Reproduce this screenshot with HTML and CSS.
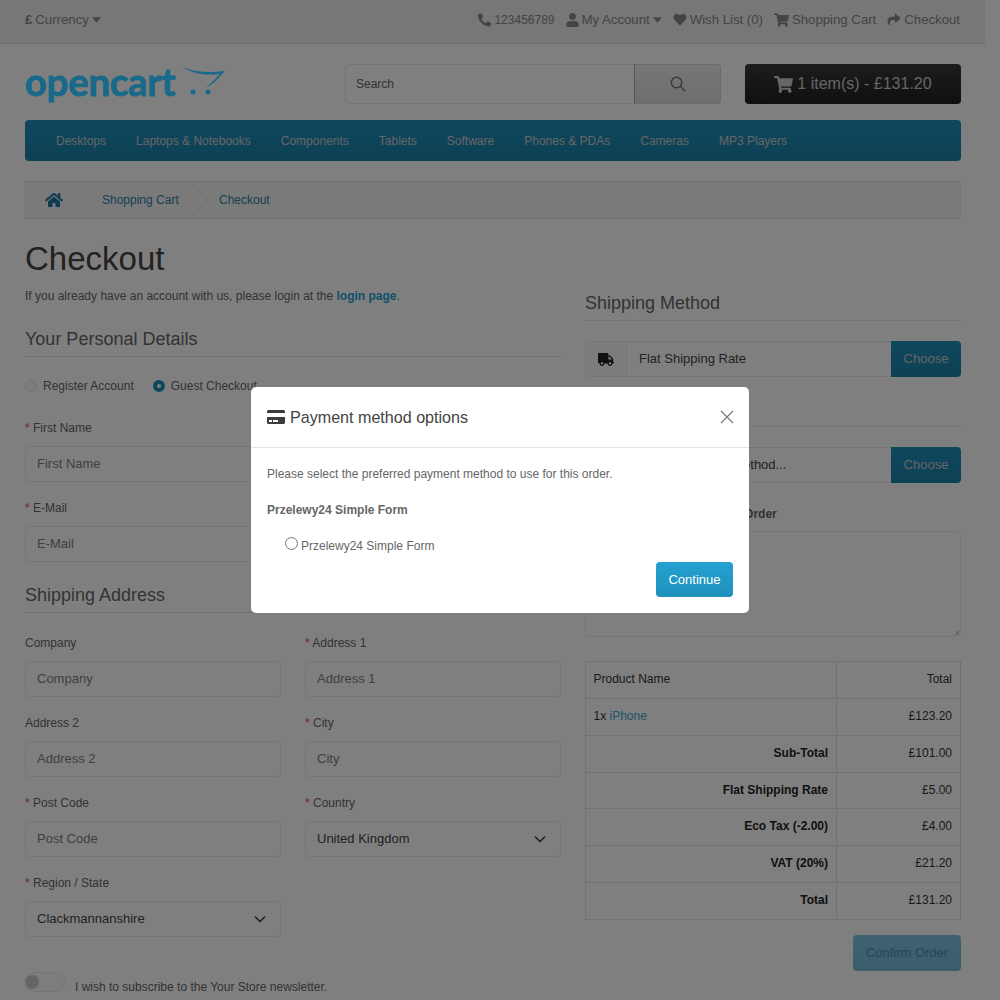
FILE: index.html
```html
<!DOCTYPE html>
<html lang="en">
<head>
<meta charset="utf-8">
<title>Checkout</title>
<link rel="stylesheet" href="styles.css">
</head>
<body>
<div class="page">
  <nav class="topbar">
    <div class="top-inner">
      <div class="top-left"><span class="pound">£</span> Currency <svg class="caret" viewBox="0 0 10 6"><path d="M0 0h10L5 6z"/></svg></div>
      <div class="top-links">
        <span class="tl phone"><svg class="ic ic-phone" viewBox="0 0 512 512"><path transform="matrix(-1 0 0 1 512 0)" d="M493.4 24.6l-104-24c-11.3-2.6-22.9 3.3-27.5 13.9l-48 112c-4.2 9.8-1.4 21.3 6.9 28l60.6 49.6c-36 76.7-98.9 140.5-177.2 177.2l-49.6-60.6c-6.8-8.3-18.2-11.1-28-6.9l-112 48C3.9 366.5-2 378.1.6 389.4l24 104C27.1 504.2 36.7 512 48 512c256.1 0 464-207.5 464-464 0-11.2-7.7-20.9-18.6-23.4z"/></svg><span class="num">123456789</span></span>
        <span class="tl"><svg class="ic ic-user" viewBox="0 0 448 512"><path d="M224 256c70.7 0 128-57.3 128-128S294.7 0 224 0 96 57.3 96 128s57.3 128 128 128zm89.6 32h-16.7c-22.2 10.2-46.9 16-72.9 16s-50.6-5.8-72.9-16h-16.7C60.2 288 0 348.2 0 422.4V464c0 26.5 21.5 48 48 48h352c26.5 0 48-21.5 48-48v-41.6c0-74.2-60.2-134.4-134.4-134.4z"/></svg>My Account <svg class="caret" viewBox="0 0 10 6"><path d="M0 0h10L5 6z"/></svg></span>
        <span class="tl"><svg class="ic ic-heart" viewBox="0 0 512 512"><path d="M462.3 62.6C407.5 15.9 326 24.3 275.7 76.2L256 96.5l-19.7-20.3C186.1 24.3 104.5 15.9 49.7 62.6c-62.8 53.6-66.1 149.8-9.9 207.9l193.5 199.8c12.5 12.9 32.8 12.9 45.3 0l193.5-199.8c56.3-58.1 53-154.3-9.8-207.9z"/></svg>Wish List (0)</span>
        <span class="tl"><svg class="ic ic-cart" viewBox="0 0 576 512"><path d="M528.12 301.319l47.273-208C578.806 78.301 567.391 64 551.99 64H159.208l-9.166-44.81C147.758 8.021 137.93 0 126.529 0H24C10.745 0 0 10.745 0 24v16c0 13.255 10.745 24 24 24h69.883l70.248 343.435C147.325 417.1 136 435.222 136 456c0 30.928 25.072 56 56 56s56-25.072 56-56c0-15.674-6.447-29.835-16.824-40h209.647C430.447 426.165 424 440.326 424 456c0 30.928 25.072 56 56 56s56-25.072 56-56c0-22.172-12.888-41.332-31.579-50.405l5.517-24.276c3.413-15.018-8.002-29.319-23.403-29.319H218.117l-6.545-32h293.145c11.206 0 20.92-7.754 23.403-18.681z"/></svg>Shopping Cart</span>
        <span class="tl"><svg class="ic ic-share" viewBox="0 0 512 512"><path d="M503.691 189.836L327.687 37.851C312.281 24.546 288 35.347 288 56.015v80.053C127.371 137.907 0 170.1 0 322.326c0 61.441 39.581 122.309 83.333 154.132 13.653 9.931 33.111-2.533 28.077-18.631C66.066 312.814 132.917 274.316 288 272.085V360c0 20.7 24.3 31.453 39.687 18.164l176.004-152c11.071-9.562 11.086-26.753 0-36.328z"/></svg>Checkout</span>
      </div>
    </div>
  </nav>

  <div class="container">
    <header class="header">
      <div class="logo">
        <span class="logo-text">opencart</span>
        <svg class="logo-cart" viewBox="0 0 48 32"><path d="M4 1C10 8 28 9 47 7C41 14 35 20 28 24C33 19 38 14 42 10C26 12 10 9 4 1z"/><circle cx="15" cy="28" r="2.500"/><circle cx="30" cy="28" r="2.500"/></svg>
      </div>
      <div class="search">
        <input class="search-input" type="text" placeholder="Search">
        <button class="search-btn" type="button"><svg viewBox="0 0 16 16"><circle cx="6.500" cy="6.500" r="5.200"/><path d="M10.500 10.500l4.700 4.700"/></svg></button>
      </div>
      <button class="cart-btn" type="button"><svg class="ic-cart-lg" viewBox="0 0 576 512"><path d="M528.12 301.319l47.273-208C578.806 78.301 567.391 64 551.99 64H159.208l-9.166-44.81C147.758 8.021 137.93 0 126.529 0H24C10.745 0 0 10.745 0 24v16c0 13.255 10.745 24 24 24h69.883l70.248 343.435C147.325 417.1 136 435.222 136 456c0 30.928 25.072 56 56 56s56-25.072 56-56c0-15.674-6.447-29.835-16.824-40h209.647C430.447 426.165 424 440.326 424 456c0 30.928 25.072 56 56 56s56-25.072 56-56c0-22.172-12.888-41.332-31.579-50.405l5.517-24.276c3.413-15.018-8.002-29.319-23.403-29.319H218.117l-6.545-32h293.145c11.206 0 20.92-7.754 23.403-18.681z"/></svg><span>1 item(s) - £131.20</span></button>
    </header>

    <nav class="menu">
      <a>Desktops</a><a>Laptops &amp; Notebooks</a><a>Components</a><a>Tablets</a><a>Software</a><a>Phones &amp; PDAs</a><a>Cameras</a><a>MP3 Players</a>
    </nav>

    <ul class="breadcrumb">
      <li><svg class="ic-home" viewBox="0 0 576 512"><path d="M280.37 148.26L96 300.11V464a16 16 0 0 0 16 16l112.06-.29a16 16 0 0 0 15.92-16V368a16 16 0 0 1 16-16h64a16 16 0 0 1 16 16v95.64a16 16 0 0 0 16 16.05L464 480a16 16 0 0 0 16-16V300L295.67 148.26a12.19 12.19 0 0 0-15.3 0zM571.6 251.47L488 182.56V44.05a12 12 0 0 0-12-12h-56a12 12 0 0 0-12 12v72.61L318.47 43a48 48 0 0 0-61 0L4.34 251.47a12 12 0 0 0-1.6 16.9l25.5 31A12 12 0 0 0 45.15 301l235.22-193.74a12.19 12.19 0 0 1 15.3 0L530.9 301a12 12 0 0 0 16.9-1.6l25.5-31a12 12 0 0 0-1.7-16.93z"/></svg></li>
      <li>Shopping Cart</li>
      <li>Checkout</li>
    </ul>

    <div class="columns">
      <section class="col-left">
        <h1>Checkout</h1>
        <p class="intro">If you already have an account with us, please login at the <a class="login">login page</a>.</p>
        <h2>Your Personal Details</h2>
        <div class="radios">
          <span class="radio-item"><span class="radio"></span>Register Account</span>
          <span class="radio-item"><span class="radio on"></span>Guest Checkout</span>
        </div>
        <div class="fields fields-personal">
          <div class="field"><label><b>*</b> First Name</label><input type="text" placeholder="First Name"></div>
          <div class="field"><label><b>*</b> Last Name</label><input type="text" placeholder="Last Name"></div>
          <div class="field"><label><b>*</b> E-Mail</label><input type="text" placeholder="E-Mail"></div>
          <div class="field"><label><b>*</b> Telephone</label><input type="text" placeholder="Telephone"></div>
        </div>
        <h2 class="h-address">Shipping Address</h2>
        <div class="fields fields-address">
          <div class="field"><label>Company</label><input type="text" placeholder="Company"></div>
          <div class="field"><label><b>*</b> Address 1</label><input type="text" placeholder="Address 1"></div>
          <div class="field"><label>Address 2</label><input type="text" placeholder="Address 2"></div>
          <div class="field"><label><b>*</b> City</label><input type="text" placeholder="City"></div>
          <div class="field"><label><b>*</b> Post Code</label><input type="text" placeholder="Post Code"></div>
          <div class="field"><label><b>*</b> Country</label><div class="select">United Kingdom<svg viewBox="0 0 12 8"><path d="M1 1.500l5 5 5-5"/></svg></div></div>
          <div class="field"><label><b>*</b> Region / State</label><div class="select">Clackmannanshire<svg viewBox="0 0 12 8"><path d="M1 1.500l5 5 5-5"/></svg></div></div>
        </div>
        <div class="newsletter"><span class="toggle"><span class="knob"></span></span><span class="news-text">I wish to subscribe to the Your Store newsletter.</span></div>
      </section>

      <section class="col-right">
        <h2>Shipping Method</h2>
        <div class="group">
          <span class="addon"><svg class="ic-truck" viewBox="0 0 640 512"><path d="M624 352h-16V243.9c0-12.7-5.1-24.9-14.1-33.9L494 110.1c-9-9-21.2-14.1-33.9-14.1H416V48c0-26.5-21.5-48-48-48H48C21.5 0 0 21.5 0 48v320c0 26.5 21.5 48 48 48h16c0 53 43 96 96 96s96-43 96-96h128c0 53 43 96 96 96s96-43 96-96h48c8.8 0 16-7.2 16-16v-32c0-8.8-7.2-16-16-16zM160 464c-26.5 0-48-21.5-48-48s21.5-48 48-48 48 21.5 48 48-21.5 48-48 48zm320 0c-26.5 0-48-21.5-48-48s21.5-48 48-48 48 21.5 48 48-21.5 48-48 48zm80-208H416V144h44.1l99.9 99.9V256z"/></svg></span>
          <span class="group-text">Flat Shipping Rate</span>
          <button class="choose" type="button">Choose</button>
        </div>
        <h2 class="h-payment">Payment Method</h2>
        <div class="group">
          <span class="addon"></span>
          <span class="group-text">Select payment method...</span>
          <button class="choose" type="button">Choose</button>
        </div>
        <label class="comment-label">Add Comments About Your Order</label>
        <div class="textarea"><svg class="grip" viewBox="0 0 6 6"><path d="M5 1L1 5M5 3.500L3.500 5"/></svg></div>
        <table class="summary">
          <tr><td>Product Name</td><td class="total">Total</td></tr>
          <tr><td>1x <a class="prod">iPhone</a></td><td class="total">£123.20</td></tr>
          <tr><td class="lbl">Sub-Total</td><td class="total">£101.00</td></tr>
          <tr><td class="lbl">Flat Shipping Rate</td><td class="total">£5.00</td></tr>
          <tr><td class="lbl">Eco Tax (-2.00)</td><td class="total">£4.00</td></tr>
          <tr><td class="lbl">VAT (20%)</td><td class="total">£21.20</td></tr>
          <tr><td class="lbl">Total</td><td class="total">£131.20</td></tr>
        </table>
        <div class="confirm-row"><button class="confirm" type="button">Confirm Order</button></div>
      </section>
    </div>
  </div>
</div>

<div class="backdrop"></div>

<div class="modal">
  <div class="modal-head">
    <div class="modal-title"><svg class="ic-card" viewBox="0 0 576 512"><path d="M0 432c0 26.500 21.500 48 48 48h480c26.500 0 48-21.500 48-48V256H0v176zm192-68c0-6.600 5.400-12 12-12h136c6.600 0 12 5.400 12 12v40c0 6.600-5.400 12-12 12H204c-6.600 0-12-5.400-12-12v-40zm-128 0c0-6.600 5.400-12 12-12h72c6.600 0 12 5.400 12 12v40c0 6.600-5.400 12-12 12H76c-6.600 0-12-5.400-12-12v-40zM576 80v48H0V80c0-26.500 21.500-48 48-48h480c26.500 0 48 21.500 48 48z"/></svg>Payment method options</div>
    <svg class="close" viewBox="0 0 14 14"><path d="M1 1l12 12M13 1L1 13"/></svg>
  </div>
  <div class="modal-body">
    <p class="modal-text">Please select the preferred payment method to use for this order.</p>
    <p class="modal-strong">Przelewy24 Simple Form</p>
    <div class="modal-option"><input type="radio" name="pm"><span>Przelewy24 Simple Form</span></div>
    <div class="modal-actions"><button class="continue" type="button">Continue</button></div>
  </div>
</div>
</body>
</html>
```
FILE: styles.css
```css
* { box-sizing: border-box; }
html, body { margin: 0; height: 1000px; overflow: hidden; }
body { font-family: "Liberation Sans", Arial, sans-serif; font-size: 12px; color: #666; background: #fff; }
.page { width: 985px; }

.topbar { height: 44px; background: #eee; border-bottom: 1px solid #e2e2e2; color: #888; font-size: 13.2px; }
.top-inner { height: 43px; padding: 0 25px 4px 25px; display: flex; justify-content: space-between; align-items: center; }
.top-left { display: flex; align-items: center; gap: 3px; }
.pound { font-weight: bold; }
.caret { width: 9px; height: 6px; fill: #888; }
.top-links { display: flex; align-items: center; gap: 11px; }
.tl { display: flex; align-items: center; gap: 3px; }
.num { font-size: 12px; }
.ic { height: 14px; fill: #888; }
.ic-phone { width: 13px; }
.ic-user { width: 13px; }
.ic-heart { width: 14px; height: 13px; }
.ic-cart { width: 15px; }
.ic-share { width: 14px; height: 13px; }

.container { width: 985px; padding: 0 24px 0 25px; }
.header { display: flex; align-items: center; height: 40px; margin-top: 20px; }
.logo { position: relative; z-index: 2; width: 320px; height: 40px; display: flex; align-items: flex-start; color: #19698a; }
.logo-text { font-family: Lato, sans-serif; font-weight: 700; font-size: 38.500px; line-height: 34px; letter-spacing: -0.300px; -webkit-text-stroke: 0.800px #19698a; }
.logo-cart { width: 48px; height: 32px; fill: #19698a; margin-left: 2px; }
.search { display: flex; width: 376px; height: 40px; }
.search-input { flex: 1; min-width: 0; height: 40px; border: 1px solid #eaeaea; border-right: 0; border-radius: 4px 0 0 4px; background: #fff; padding: 0 10px; font: 12px "Liberation Sans", sans-serif; color: #555; }
.search-input::placeholder { color: #666; }
.search-btn { width: 87px; height: 40px; border: 1px solid #d5d5d5; border-left-color: #aaa; border-radius: 0 4px 4px 0; background: linear-gradient(#eee, #ddd); display: flex; align-items: center; justify-content: center; padding: 0; }
.search-btn svg { width: 16px; height: 16px; fill: none; stroke: #777; stroke-width: 1.500; }
.cart-btn { margin-left: 24px; width: 216px; height: 40px; border: 0; border-radius: 4px; background: linear-gradient(#3a3a3a, #1f1f1f); color: #ccc; font: 16px "Liberation Sans", sans-serif; display: flex; align-items: center; justify-content: center; gap: 4px; padding: 0; }
.ic-cart-lg { width: 19px; height: 17px; fill: #ccc; }

.menu { display: flex; height: 41px; margin-top: 16px; border-radius: 4px; background: linear-gradient(#1f8fba, #1b82aa); align-items: center; color: #ccc; font-size: 12px; padding-left: 16px; }
.menu a { padding: 0 15px; }

.breadcrumb { list-style: none; margin: 20px 0 0; padding: 0; height: 38px; border: 1px solid #e8e8e8; background: #f5f5f5; display: flex; align-items: center; color: #2a80a8; overflow: hidden; }
.breadcrumb li { position: relative; height: 38px; display: flex; align-items: center; padding-left: 16px; }
.breadcrumb li:first-child { width: 60px; padding-left: 19px; }
.breadcrumb li:nth-child(2) { width: 117px; }
.breadcrumb li:nth-child(3) { width: 91px; }
.breadcrumb li::after { content: ""; position: absolute; right: 0; top: 4px; width: 28px; height: 28px; border-top: 1px solid #e8e8e8; border-right: 1px solid #e8e8e8; transform: rotate(45deg); }
.ic-home { width: 18px; height: 16px; fill: #1f78a0; }

.columns { display: grid; grid-template-columns: 536px 376px; column-gap: 24px; margin-top: 21px; }
h1 { margin: 0; font-size: 33px; font-weight: normal; line-height: 38px; color: #444; }
.intro { margin: 10px 0 0; line-height: 17px; }
.login { color: #23a1d1; font-weight: bold; }
h2 { margin: 0; font-size: 18px; font-weight: normal; line-height: 20px; padding-bottom: 7px; border-bottom: 1px solid #e5e5e5; color: #666; }
.col-left h2 { margin-top: 24px; }
.radios { display: flex; gap: 19px; margin-top: 20px; height: 17px; align-items: center; }
.radio-item { display: flex; align-items: center; gap: 6px; }
.radio { width: 12px; height: 12px; border-radius: 50%; border: 1px solid #e2e2e2; background: #f8f8f8; }
.radio.on { border: 4px solid #1f8fba; background: #fff; }

.fields { display: grid; grid-template-columns: 256px 256px; column-gap: 24px; row-gap: 18px; }
.fields-personal { margin-top: 26px; }
.col-left .h-address { margin-top: 23px; }
.fields-address { margin-top: 22px; }
.field label { display: block; line-height: 17px; margin-bottom: 9px; }
.field label b { color: #d9534f; font-weight: normal; }
.field input, .select { display: flex; width: 100%; height: 36px; border: 1px solid #eaeaea; border-radius: 4px; background: #fff; padding: 0 11px 1px; font: 13px "Liberation Sans", sans-serif; color: #555; align-items: center; justify-content: space-between; }
.field input::placeholder { color: #808080; }
.select { color: #444; padding-right: 14px; }
.select svg { width: 12px; height: 8px; fill: none; stroke: #444; stroke-width: 1.600; }
.newsletter { display: flex; align-items: center; gap: 10px; margin-top: 35px; }
.toggle { display: flex; align-items: center; width: 40px; height: 20px; border: 1px solid #ededed; border-radius: 10px; background: #fafafa; }
.knob { width: 14px; height: 14px; margin: -1px 0 0 -1px; border-radius: 50%; background: #cacaca; }
.news-text { position: relative; top: 5px; }

.col-right { padding-top: 53px; }
.group { display: flex; height: 36px; margin-top: 20px; border: 1px solid #eaeaea; border-radius: 4px; align-items: stretch; }
.addon { width: 41px; background: #f8f8f8; border-right: 1px solid #eaeaea; display: flex; align-items: center; justify-content: center; border-radius: 4px 0 0 4px; }
.ic-truck { width: 16px; height: 13px; fill: #222; }
.group-text { flex: 1; display: flex; align-items: center; padding: 0 0 2px 12px; font-size: 13px; color: #444; }
.choose { width: 70px; margin: -1px -1px -1px 0; border: 0; border-radius: 0 4px 4px 0; background: linear-gradient(#1f8fba, #1b82aa); color: #ccc; font: 13px "Liberation Sans", sans-serif; padding: 0 0 2px; }
.h-payment { margin-top: 22px; }
.comment-label { display: block; margin-top: 23px; font-weight: bold; line-height: 17px; color: #666; }
.textarea { position: relative; height: 106px; margin-top: 8px; border: 1px solid #eaeaea; border-radius: 4px; background: #fff; }
.grip { position: absolute; right: 0; bottom: 0; width: 6px; height: 6px; fill: none; stroke: #999; }
.summary { width: 100%; margin-top: 24px; border-collapse: collapse; table-layout: fixed; color: #333; }
.summary td { border: 1px solid #e2e2e2; padding: 8px 8px 8px 7.500px; line-height: 19.850px; }
.summary td:first-child { width: 251px; }
.summary .total { text-align: right; }
.summary .lbl { text-align: right; font-weight: bold; color: #222; }
.prod { color: #3da8d4; }
.confirm-row { display: flex; justify-content: flex-end; margin-top: 15px; }
.confirm { position: relative; z-index: 2; width: 108px; height: 36px; border: 0; border-radius: 4px; background: linear-gradient(#3f6272, #3b5c6b); color: #27464f; font: 13px "Liberation Sans", sans-serif; padding: 0; }

.backdrop { position: fixed; inset: 0; background: rgba(0, 0, 0, .5); z-index: 1; }

.modal { position: fixed; left: 251px; top: 387px; width: 498px; height: 226px; background: #fff; border-radius: 5px; z-index: 3; }
.modal-head { height: 61px; padding: 0 15px 0 16px; border-bottom: 1px solid #e5e5e5; display: flex; align-items: center; justify-content: space-between; }
.modal-title { display: flex; align-items: center; gap: 5px; font-size: 16.100px; color: #444; }
.ic-card { width: 18px; height: 16px; fill: #3c3c3c; }
.close { width: 14px; height: 14px; fill: none; stroke: #777; stroke-width: 1.200; }
.modal-body { padding: 0 16px; }
.modal-text { margin: 18px 0 0; line-height: 17px; color: #666; }
.modal-strong { margin: 19px 0 0; line-height: 17px; font-weight: bold; color: #666; }
.modal-option { display: flex; align-items: flex-start; margin: 16px 0 0 18px; height: 20px; color: #666; }
.modal-option input { width: 13px; height: 13px; margin: 2px 3px 0 0; }
.modal-option span { margin-top: 3px; line-height: 17px; }
.modal-actions { display: flex; justify-content: flex-end; margin-top: 7px; }
.continue { width: 77px; height: 35px; border: 0; border-radius: 4px; background: linear-gradient(#23a1d1, #1f90bb); color: #fff; font: 13px "Liberation Sans", sans-serif; padding: 0 0 1px; }
```
